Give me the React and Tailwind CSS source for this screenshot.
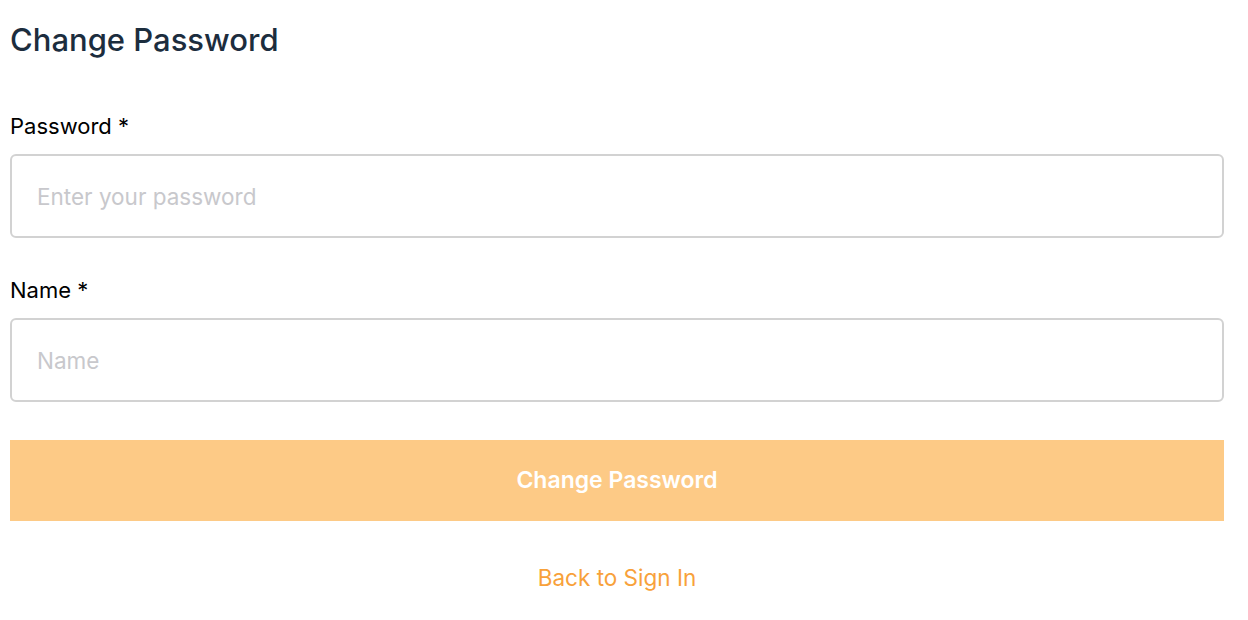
import React from "react";

const App = () => {
  return (
    <div
      className="min-h-[620px] bg-white pl-[10px] pr-[24px] pt-[20px]"
      style={{ fontFamily: "Inter, 'Noto Sans', sans-serif" }}
    >
      <h1 className="text-[31px] leading-[40px] font-medium text-[#1c2d3e]">
        Change Password
      </h1>

      <div className="mt-[51px]">
        <label className="block text-[22px] leading-[30px] text-black">
          Password *
        </label>
        <input
          type="password"
          placeholder="Enter your password"
          className="mt-[13px] block h-[84px] w-full rounded-[6px] border-2 border-[#d2d2d2] px-[25px] text-[22.5px] placeholder:text-[#c8c8cc] outline-none"
        />
      </div>

      <div className="mt-[37px]">
        <label className="block text-[22px] leading-[30px] text-black">
          Name *
        </label>
        <input
          type="text"
          placeholder="Name"
          className="mt-[13px] block h-[84px] w-full rounded-[6px] border-2 border-[#d2d2d2] px-[25px] text-[22.5px] placeholder:text-[#c8c8cc] outline-none"
        />
      </div>

      <button className="mt-[38px] flex h-[81px] w-full items-center justify-center bg-[#fdca86] text-[23px] font-semibold text-white">
        Change Password
      </button>

      <div className="mt-[42px] text-center text-[22.5px] leading-[30px] text-[#f8a13a]">
        Back to Sign In
      </div>
    </div>
  );
};

export default App;
